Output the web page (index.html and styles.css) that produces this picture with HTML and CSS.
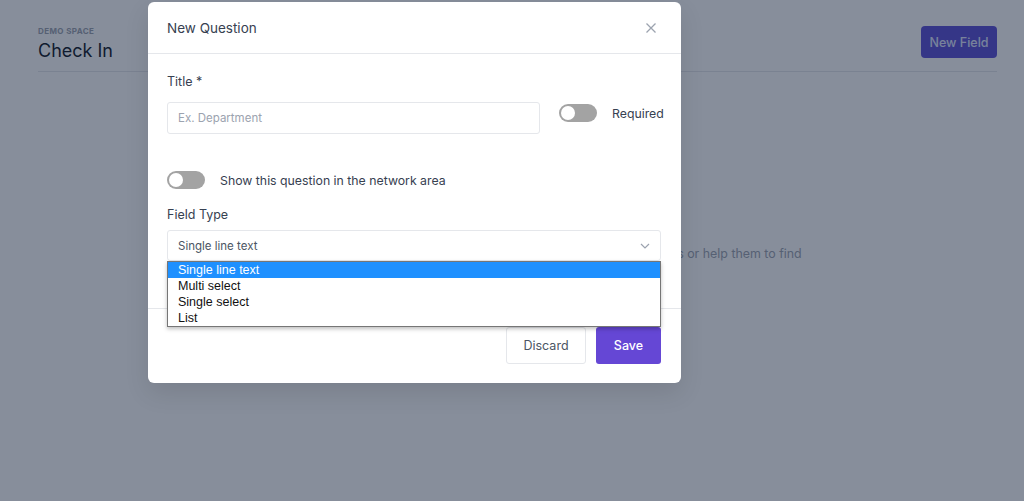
FILE: index.html
```html
<!DOCTYPE html>
<html>
<head>
<meta charset="utf-8">
<link rel="stylesheet" href="styles.css">
</head>
<body>
<div class="page">
  <header class="page-head">
    <div class="head-left">
      <div class="eyebrow">DEMO SPACE</div>
      <h1 class="page-title">Check In</h1>
    </div>
    <button class="btn-new">New Field</button>
  </header>
  <div class="empty">
    <p class="empty-text">Add questions to learn more about your members or help them to find</p>
  </div>
</div>

<div class="overlay"></div>

<div class="modal">
  <div class="modal-head">
    <span class="modal-title">New Question</span>
    <svg class="close" width="12" height="12" viewBox="0 0 12 12"><path d="M1.5 1.5 L10.5 10.5 M10.5 1.5 L1.5 10.5" stroke="#9ca3af" stroke-width="1.3" fill="none"/></svg>
  </div>
  <div class="modal-body">
    <label class="label">Title *</label>
    <div class="title-row">
      <div class="input placeholder">Ex. Department</div>
      <div class="toggle-wrap">
        <span class="toggle"><span class="knob"></span></span>
        <span class="toggle-label">Required</span>
      </div>
    </div>
    <div class="show-row">
      <span class="toggle"><span class="knob"></span></span>
      <span class="toggle-label">Show this question in the network area</span>
    </div>
    <label class="label field-label">Field Type</label>
    <div class="select-wrap">
      <div class="input select">
        <span>Single line text</span>
        <svg width="10" height="6" viewBox="0 0 10 6"><path d="M1 1 L5 5 L9 1" stroke="#9ca3af" stroke-width="1.2" fill="none"/></svg>
      </div>
      <ul class="dropdown">
        <li class="active">Single line text</li>
        <li>Multi select</li>
        <li>Single select</li>
        <li>List</li>
      </ul>
    </div>
  </div>
  <div class="modal-foot">
    <button class="btn-discard">Discard</button>
    <button class="btn-save">Save</button>
  </div>
</div>
</body>
</html>
```
FILE: styles.css
```css
* { box-sizing: border-box; }
html, body { margin: 0; padding: 0; }
body {
  width: 1024px;
  height: 501px;
  overflow: hidden;
  background: #ffffff;
  font-family: Inter, "Noto Sans", sans-serif;
  position: relative;
}
.page { padding: 0 27px 0 38px; }
.page-head {
  display: flex;
  justify-content: space-between;
  align-items: flex-start;
  padding-top: 26px;
  height: 72px;
  border-bottom: 1px solid #e5e7eb;
}
.eyebrow {
  font-size: 8px;
  font-weight: 700;
  letter-spacing: 0.4px;
  color: #9ca3af;
  margin-top: 0;
  line-height: 10px;
}
.page-title {
  margin: 3px 0 0;
  font-size: 18px;
  font-weight: 400;
  color: #111827;
  line-height: 24px;
}
.btn-new {
  background: #5b4ed6;
  color: #e0e7ff;
  border: none;
  border-radius: 4px;
  height: 32px;
  width: 76px;
  font-family: inherit;
  font-size: 12.5px;
  font-weight: 500;
}
.empty { display: flex; justify-content: center; padding-top: 174px; }
.empty-text {
  margin: 0;
  font-size: 12.4px;
  color: #9ca3af;
  text-align: center;
  transform: translateX(80px);
}
.overlay {
  position: absolute;
  inset: 0;
  background: rgba(15, 30, 55, 0.5);
}
.modal {
  position: absolute;
  left: 148px;
  top: 2px;
  width: 533px;
  background: #fff;
  border-radius: 6px;
  box-shadow: 0 10px 25px rgba(0,0,0,0.1);
}
.modal-head {
  height: 52px;
  display: flex;
  align-items: center;
  justify-content: space-between;
  padding: 0 24px 0 19px;
  border-bottom: 1px solid #e5e7eb;
}
.modal-title { font-size: 13.5px; font-weight: 400; color: #374151; }
.close { display: block; }
.modal-body { padding: 20px 20px 47px 19px; }
.label {
  display: block;
  font-size: 12.5px;
  font-weight: 400;
  color: #374151;
  line-height: 16px;
}
.title-row {
  display: flex;
  align-items: flex-start;
  margin-top: 12px;
}
.input {
  height: 32px;
  border: 1px solid #e5e7eb;
  border-radius: 3px;
  padding: 0 10px;
  display: flex;
  align-items: center;
  font-size: 11.5px;
  color: #4b5563;
}
.placeholder { width: 373px; flex: none; color: #9ca3af; }
.toggle-wrap { display: flex; align-items: center; margin-left: 19px; margin-top: 2px; }
.toggle {
  display: inline-block;
  width: 38px;
  height: 18px;
  border-radius: 9px;
  background: #a3a3a3;
  position: relative;
  flex: none;
}
.knob {
  position: absolute;
  left: 2px;
  top: 2px;
  width: 14px;
  height: 14px;
  border-radius: 50%;
  background: #fff;
}
.toggle-label {
  margin-left: 15px;
  font-size: 12.3px;
  font-weight: 400;
  color: #374151;
}
.show-row {
  display: flex;
  align-items: center;
  margin-top: 37px;
}
.field-label { margin-top: 18px; }
.select-wrap { position: relative; margin-top: 7px; }
.select { justify-content: space-between; height: 31px; padding-right: 10px; }
.dropdown {
  position: absolute;
  left: 0;
  right: 0;
  top: 31px;
  margin: 0;
  padding: 0;
  list-style: none;
  background: #fff;
  border: 1px solid #767676;
  box-shadow: 0 2px 4px rgba(0,0,0,0.25);
  font-family: "Liberation Sans", Arial, sans-serif;
  font-size: 12.5px;
  color: #111;
  z-index: 2;
}
.dropdown li { height: 16px; line-height: 16px; padding-left: 10px; }
.dropdown li.active { background: #1e90ff; color: #fff; }
.modal-foot {
  border-top: 1px solid #e5e7eb;
  display: flex;
  justify-content: flex-end;
  gap: 10px;
  padding: 18px 20px 19px;
}
.modal-foot button {
  height: 37px;
  border-radius: 3px;
  font-family: inherit;
  font-size: 12.5px;
}
.btn-discard {
  width: 80px;
  background: #fff;
  border: 1px solid #e5e7eb;
  color: #4b5563;
  font-weight: 400;
}
.btn-save {
  width: 65px;
  background: #6547d5;
  border: none;
  color: #fff;
  font-weight: 500;
}
```
